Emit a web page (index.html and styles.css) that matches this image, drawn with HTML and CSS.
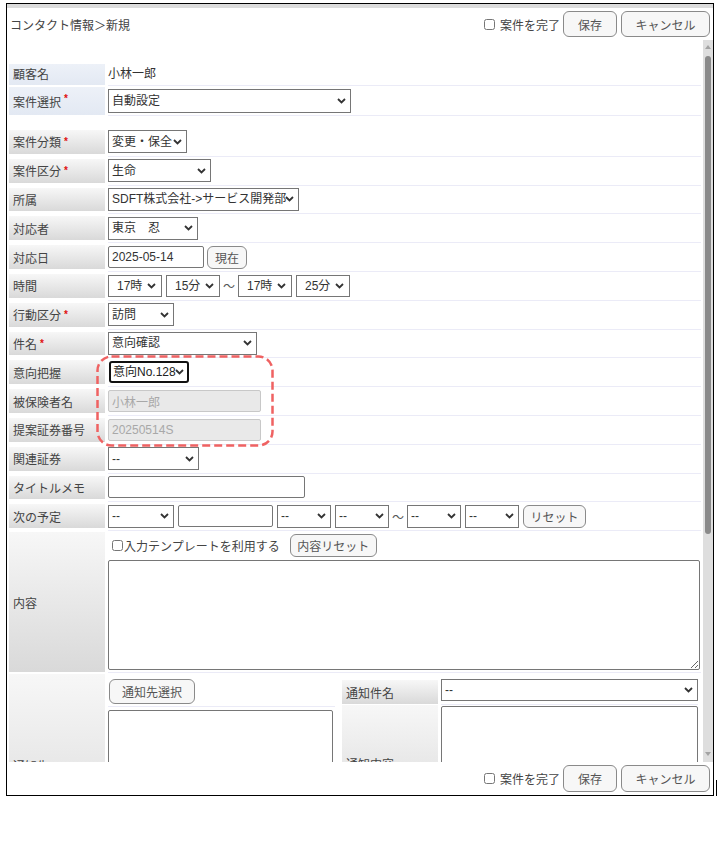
FILE: index.html
```html
<!DOCTYPE html>
<html lang="ja">
<head>
<meta charset="utf-8">
<title>コンタクト情報＞新規</title>
<link rel="stylesheet" href="styles.css">
</head>
<body>
<div class="frame">
  <div class="strip"></div>
  <header class="bar">
    <div class="crumb">コンタクト情報＞新規</div>
    <div class="actions">
      <label class="done"><input type="checkbox">案件を完了</label>
      <button class="btn save">保存</button>
      <button class="btn cancel">キャンセル</button>
    </div>
  </header>

  <div class="viewport">
    <div class="content">
      <div class="row first">
        <div class="lbl blue">顧客名</div>
        <div class="val plain">小林一郎</div>
      </div>
      <div class="row second">
        <div class="lbl blue">案件選択<span class="req">*</span></div>
        <div class="val"><select class="sel w243 h24"><option>自動設定</option></select></div>
      </div>
      <div class="spacer"></div>

      <div class="row">
        <div class="lbl">案件分類<span class="req">*</span></div>
        <div class="val"><select class="sel w79"><option>変更・保全</option></select></div>
      </div>
      <div class="row">
        <div class="lbl">案件区分<span class="req">*</span></div>
        <div class="val"><select class="sel w103"><option>生命</option></select></div>
      </div>
      <div class="row">
        <div class="lbl">所属</div>
        <div class="val"><select class="sel w191"><option>SDFT株式会社-&gt;サービス開発部</option></select></div>
      </div>
      <div class="row">
        <div class="lbl">対応者</div>
        <div class="val"><select class="sel w90"><option>東京　忍</option></select></div>
      </div>
      <div class="row">
        <div class="lbl">対応日</div>
        <div class="val tight"><input class="txt w96" type="text" value="2025-05-14"><button class="btn sm w40">現在</button></div>
      </div>
      <div class="row">
        <div class="lbl">時間</div>
        <div class="val">
          <select class="sel time"><option>17時</option></select>
          <select class="sel time"><option>15分</option></select>
          <span class="tilde">〜</span>
          <select class="sel time"><option>17時</option></select>
          <select class="sel time"><option>25分</option></select>
        </div>
      </div>
      <div class="row">
        <div class="lbl">行動区分<span class="req">*</span></div>
        <div class="val"><select class="sel w66"><option>訪問</option></select></div>
      </div>
      <div class="row">
        <div class="lbl">件名<span class="req">*</span></div>
        <div class="val"><select class="sel w149"><option>意向確認</option></select></div>
      </div>
      <div class="row">
        <div class="lbl">意向把握</div>
        <div class="val"><select class="sel focus"><option>意向No.128</option></select></div>
      </div>
      <div class="row">
        <div class="lbl">被保険者名</div>
        <div class="val"><input class="txt dis w153" type="text" value="小林一郎" disabled></div>
      </div>
      <div class="row">
        <div class="lbl">提案証券番号</div>
        <div class="val"><input class="txt dis w153" type="text" value="20250514S" disabled></div>
      </div>
      <div class="row">
        <div class="lbl">関連証券</div>
        <div class="val"><select class="sel w91"><option>--</option></select></div>
      </div>
      <div class="row">
        <div class="lbl">タイトルメモ</div>
        <div class="val"><input class="txt w197" type="text" value=""></div>
      </div>
      <div class="row">
        <div class="lbl">次の予定</div>
        <div class="val">
          <select class="sel w66"><option>--</option></select>
          <input class="txt w95" type="text" value="">
          <select class="sel w54"><option>--</option></select>
          <select class="sel w54"><option>--</option></select>
          <span class="tilde">〜</span>
          <select class="sel w54"><option>--</option></select>
          <select class="sel w54"><option>--</option></select>
          <button class="btn sm w63">リセット</button>
        </div>
      </div>

      <div class="row tall">
        <div class="lbl">内容</div>
        <div class="val col">
          <div class="tmpl">
            <label class="chk"><input type="checkbox">入力テンプレートを利用する</label>
            <button class="btn sm w87">内容リセット</button>
          </div>
          <textarea class="memo"></textarea>
        </div>
      </div>

      <div class="row notify">
        <div class="lbl">通知先</div>
        <div class="val nval">
          <div class="ncol">
            <div class="nbtnrow"><button class="btn nb">通知先選択</button></div>
            <textarea class="nlist"></textarea>
          </div>
          <div class="ngrid">
            <div class="nrow">
              <div class="lbl">通知件名</div>
              <div class="nv"><select class="sel w257"><option>--</option></select></div>
            </div>
            <div class="nrow big">
              <div class="lbl">通知内容</div>
              <div class="nv"><textarea class="nbody"></textarea></div>
            </div>
          </div>
        </div>
      </div>

      <svg class="hl" width="178" height="92" viewBox="0 0 178 92">
        <rect x="1.5" y="1.5" width="175" height="89" rx="14" ry="14" fill="none" stroke="#ef6262" stroke-width="2.5" stroke-dasharray="8 4"/>
      </svg>
    </div>
    <div class="scrollbar">
      <span class="arrow up"></span>
      <div class="thumb"></div>
      <span class="arrow down"></span>
    </div>
  </div>

  <footer class="bar foot">
    <div class="actions">
      <label class="done"><input type="checkbox">案件を完了</label>
      <button class="btn save">保存</button>
      <button class="btn cancel">キャンセル</button>
    </div>
  </footer>
</div>
</body>
</html>
```

FILE: styles.css
```css
* { box-sizing: border-box; }
html, body { margin: 0; padding: 0; background: #fff; }
body {
  font-family: "Liberation Sans", "Noto Sans CJK JP", sans-serif;
  font-size: 12px;
  color: #444;
}

.frame {
  position: relative;
  margin: 3px 0 0 6px;
  width: 708px;
  height: 793px;
  border: 1px solid #000;
  display: flex;
  flex-direction: column;
}
.frame::after {
  content: "";
  position: absolute;
  left: 709px;
  top: 776px;
  width: 1px;
  height: 17px;
  background: #000;
}

.strip { height: 4px; background: #dcdcdc; flex: none; }

.bar {
  height: 32px;
  flex: none;
  display: flex;
  align-items: center;
  padding: 0 3px;
}
.crumb { flex: 1; color: #444; }
.actions { display: flex; align-items: center; margin-left: auto; }
.done { display: flex; align-items: center; margin-right: 3px; color: #444; }
.done input { width: 11px; height: 11px; margin: 0 5px 0 0; }

.btn {
  font: inherit;
  color: #555;
  background: #f7f7f7;
  border: 1px solid #8a8a8a;
  border-radius: 6px;
  padding: 0;
  height: 26px;
}
.btn.save { width: 54px; margin-right: 4px; }
.btn.cancel { width: 89px; }
.foot { height: 33px; }
.foot .btn { height: 27px; }

.viewport { height: 722px; flex: none; display: flex; }
.content {
  flex: 1;
  position: relative;
  overflow: hidden;
  padding: 22px 2px 0 2px;
}

.scrollbar {
  width: 10px;
  flex: none;
  background: #dedede;
  display: flex;
  flex-direction: column;
  align-items: center;
}
.arrow { width: 0; height: 0; border-left: 3px solid transparent; border-right: 3px solid transparent; }
.arrow.up { margin-top: 5px; border-bottom: 4px solid #a3a3a3; }
.arrow.down { margin-top: auto; margin-bottom: 6px; border-top: 4px solid #a3a3a3; }
.thumb { margin-top: 7px; width: 6px; height: 478px; border-radius: 3px; background: #8a8a8a; }

/* rows */
.row { display: flex; height: 28.8px; }
.row.first { height: 24px; }
.row.second { height: 30px; }
.spacer { height: 12px; }

.lbl {
  width: 96px;
  flex: none;
  margin: 2px 0 3px;
  padding-left: 4px;
  display: flex;
  align-items: center;
  color: #444;
  background: linear-gradient(#f7f7f7, #d9d9d9);
}
.lbl.blue { background: linear-gradient(#edf1f8, #e3e9f3); }
.row.first .lbl { margin: 2px 0 1px; padding-bottom: 2px; }
.row.second .lbl { margin: 1px 0 1px; }
.req { color: #e01010; font-size: 10px; font-weight: bold; margin-left: 3px; align-self: flex-start; margin-top: 6px; }

.val {
  flex: 1;
  margin-left: 3px;
  border-bottom: 1px solid #ebebf7;
  display: flex;
  align-items: center;
  gap: 4px;
}
.val.plain { color: #333; padding-bottom: 2px; }
.val.tight { gap: 3px; }

.sel {
  font: inherit;
  color: #333;
  height: 23px;
  border: 1px solid #767676;
  border-radius: 0;
  background: #fff url("data:image/svg+xml,%3Csvg xmlns='http://www.w3.org/2000/svg' width='9' height='6' viewBox='0 0 9 6'%3E%3Cpath d='M1 1l3.5 3.5L8 1' fill='none' stroke='%23333' stroke-width='1.8'/%3E%3C/svg%3E") no-repeat right 4px center;
  -webkit-appearance: none;
  appearance: none;
  padding: 0 11px 0 3px;
  margin: 0;
}
.sel.h24 { height: 24px; }
.sel.time { width: 54px; height: 22px; padding-left: 8px; background-position: right 5px center; }
.w243 { width: 243px; }
.w79 { width: 79px; }
.w103 { width: 103px; }
.w191 { width: 191px; }
.w90 { width: 90px; }
.w66 { width: 66px; }
.w149 { width: 149px; }
.w91 { width: 91px; }
.w54 { width: 54px; }
.w257 { width: 257px; }
.w96 { width: 96px; }
.w95 { width: 95px; }
.w153 { width: 153px; }
.w197 { width: 197px; }
.w40 { width: 40px; }
.w63 { width: 63px; }
.w87 { width: 87px; }

.sel.focus {
  width: 80px;
  height: 22px;
  margin-left: 1px;
  border: 2px solid #111;
  border-radius: 3px;
  color: #222;
  padding: 0 10px 0 2px;
  background-position: right 3px center;
}

.txt {
  font: inherit;
  color: #333;
  height: 22px;
  border: 1px solid #767676;
  border-radius: 2px;
  background: #fff;
  padding: 0 3px;
  margin: 0;
}
.txt.dis { background: #e9e9e9; border-color: #c8c8c8; color: #a8a8a8; }

.btn.sm { height: 23px; }
.tilde { color: #555; margin: 0 -2px 0 -2px; width: 14px; text-align: center; }

/* 内容 */
.row.tall { height: 142px; }
.row.tall .lbl { margin: 1px 0 1px; }
.val.col { flex-direction: column; align-items: flex-start; gap: 3px; padding-top: 3px; }
.tmpl { display: flex; align-items: center; height: 23px; }
.chk { display: flex; align-items: center; color: #444; }
.chk input { width: 11px; height: 11px; margin: 0 1px 0 4px; }
.tmpl .btn { margin-left: 10px; }
.memo {
  width: 592px;
  height: 110px;
  border: 1px solid #767676;
  border-radius: 2px;
  margin: 0;
  font: inherit;
}

/* 通知先 */
.row.notify { height: 190px; }
.row.notify > .lbl { height: 182px; margin: 1px 0 0; }
.val.nval { align-items: flex-start; border-bottom: none; gap: 0; }
.ncol { width: 227px; flex: none; display: flex; flex-direction: column; }
.nbtnrow { height: 34px; padding: 6px 0 0 1px; border-bottom: 1px solid #ebebf7; }
.btn.nb { width: 86px; height: 25px; }
.nlist { margin: 3px 0 0; width: 225px; height: 130px; border: 1px solid #767676; border-radius: 2px; font: inherit; }
.ngrid { flex: 1; margin-left: 7px; margin-right: 4px; display: flex; flex-direction: column; }
.nrow { display: flex; height: 32px; }
.nrow .lbl { margin: 7px 0 1px; }
.nv { flex: 1; margin-left: 3px; border-bottom: 1px solid #ebebf7; display: flex; align-items: flex-start; padding-top: 6px; }
.nv .sel { height: 22px; }
.nrow.big { height: 150px; }
.nrow.big .lbl { margin: 0; height: 116px; }
.nrow.big .nv { border-bottom: none; padding-top: 1px; }
.nbody { width: 257px; height: 130px; border: 1px solid #767676; border-radius: 2px; margin: 0; font: inherit; }

.hl { position: absolute; left: 89px; top: 315px; }
```
